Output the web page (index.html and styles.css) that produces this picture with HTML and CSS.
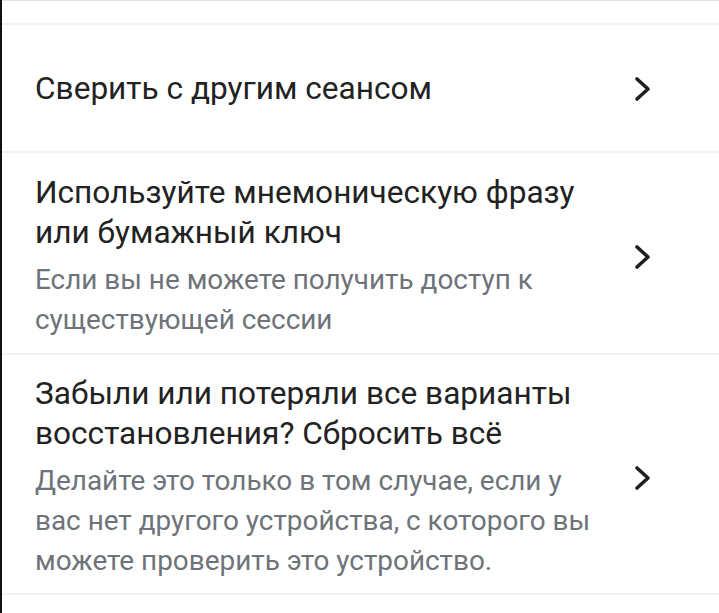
FILE: index.html
```html
<!DOCTYPE html>
<html lang="ru">
<head>
    <meta charset="UTF-8">
    <meta name="viewport" content="width=device-width, initial-scale=1.0">
    <title>Восстановление доступа</title>
    <link rel="stylesheet" href="styles.css">
</head>
<body>

    <div class="screen">
        <div class="top-cut">
            <span class="top-cut-text">Подтвердите устройство</span>
        </div>

        <div class="option option-single">
            <div class="option-text">
                <div class="option-title">Сверить с другим сеансом</div>
            </div>
            <svg class="chevron" viewBox="0 0 18 26" width="18" height="26">
                <path d="M3 3 L14 13 L3 23" fill="none" stroke="#1f1f1f" stroke-width="3.6" stroke-linecap="round" stroke-linejoin="round"/>
            </svg>
        </div>

        <div class="option">
            <div class="option-text">
                <div class="option-title">Используйте мнемоническую фразу или бумажный ключ</div>
                <div class="option-sub">Если вы не можете получить доступ к существующей сессии</div>
            </div>
            <svg class="chevron" viewBox="0 0 18 26" width="18" height="26">
                <path d="M3 3 L14 13 L3 23" fill="none" stroke="#1f1f1f" stroke-width="3.6" stroke-linecap="round" stroke-linejoin="round"/>
            </svg>
        </div>

        <div class="option option-last">
            <div class="option-text">
                <div class="option-title">Забыли или потеряли все варианты восстановления? Сбросить всё</div>
                <div class="option-sub">Делайте это только в том случае, если у вас нет другого устройства, с которого вы можете проверить это устройство.</div>
            </div>
            <svg class="chevron" viewBox="0 0 18 26" width="18" height="26">
                <path d="M3 3 L14 13 L3 23" fill="none" stroke="#1f1f1f" stroke-width="3.6" stroke-linecap="round" stroke-linejoin="round"/>
            </svg>
        </div>
    </div>

</body>
</html>
```

FILE: styles.css
```css
html, body {
    margin: 0;
    padding: 0;
    background: #ffffff;
}
body {
    font-family: Roboto, "Noto Sans", sans-serif;
    width: 719px;
    height: 613px;
    overflow: hidden;
}
.screen {
    border-left: 2px solid #111111;
    min-height: 613px;
    box-sizing: border-box;
}
.top-cut {
    height: 22px;
    overflow: hidden;
    border-top: 1px solid #e2e2e2;
    border-bottom: 2px solid #f2f2f2;
    box-sizing: content-box;
}
.top-cut-text {
    display: block;
    margin-top: -37px;
    padding-left: 33px;
    font-size: 28px;
    line-height: 40px;
    color: #8a8a8a;
}
.option {
    display: flex;
    align-items: center;
    padding: 20px 67px 13px 33px;
    border-bottom: 2px solid #f2f2f2;
}
.option-single {
    height: 128px;
    box-sizing: border-box;
    padding-top: 2px;
    padding-bottom: 0;
}
.option-last {
    padding-top: 19px;
    padding-bottom: 12px;
}
.option-text {
    flex: 0 0 572px;
}
.option-title {
    font-size: 31.6px;
    line-height: 39.5px;
    color: #222222;
}
.option-sub {
    margin-top: 8px;
    font-size: 27.9px;
    line-height: 40px;
    color: #6e737a;
}
.chevron {
    flex: none;
    display: block;
    margin-left: auto;
}
```
